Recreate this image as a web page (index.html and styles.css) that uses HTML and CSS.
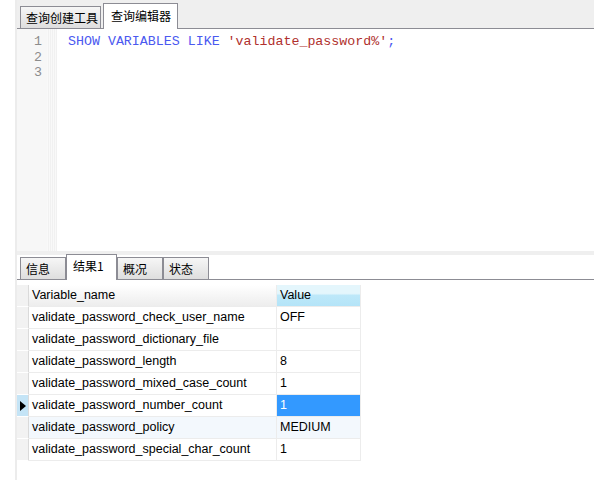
FILE: index.html
```html
<!DOCTYPE html>
<html>
<head>
<meta charset="utf-8">
<link rel="stylesheet" href="styles.css">
</head>
<body>
<div class="app">
  <div class="tabbar top">
    <div class="tab">查询创建工具</div>
    <div class="tab active">查询编辑器</div>
  </div>
  <div class="editor">
    <div class="gutter">
      <div class="nums"><div>1</div><div>2</div><div>3</div></div>
      <div class="stripe"></div>
    </div>
    <div class="code">
      <div><span class="kw">SHOW VARIABLES LIKE</span> <span class="str">'validate_password%'</span><span class="kw">;</span></div>
      <div>&nbsp;</div>
      <div>&nbsp;</div>
    </div>
  </div>
  <div class="sep"></div>
  <div class="tabbar bottom">
    <div class="tab">信息</div>
    <div class="tab active">结果1</div>
    <div class="tab">概况</div>
    <div class="tab">状态</div>
  </div>
  <div class="results">
    <div class="grid">
      <div class="row head">
        <div class="ind"></div>
        <div class="c1">Variable_name</div>
        <div class="c2 sel">Value</div>
      </div>
      <div class="row">
        <div class="ind"></div>
        <div class="c1">validate_password_check_user_name</div>
        <div class="c2">OFF</div>
      </div>
      <div class="row">
        <div class="ind"></div>
        <div class="c1">validate_password_dictionary_file</div>
        <div class="c2"></div>
      </div>
      <div class="row">
        <div class="ind"></div>
        <div class="c1">validate_password_length</div>
        <div class="c2">8</div>
      </div>
      <div class="row">
        <div class="ind"></div>
        <div class="c1">validate_password_mixed_case_count</div>
        <div class="c2">1</div>
      </div>
      <div class="row current">
        <div class="ind"><span class="arrow"></span></div>
        <div class="c1">validate_password_number_count</div>
        <div class="c2 cellsel">1</div>
      </div>
      <div class="row alt">
        <div class="ind"></div>
        <div class="c1">validate_password_policy</div>
        <div class="c2">MEDIUM</div>
      </div>
      <div class="row">
        <div class="ind"></div>
        <div class="c1">validate_password_special_char_count</div>
        <div class="c2">1</div>
      </div>
    </div>
  </div>
</div>
</body>
</html>
```
FILE: styles.css
```css
html, body {
  margin: 0;
  padding: 0;
  background: #ffffff;
  width: 594px;
  height: 480px;
  overflow: hidden;
}
.app {
  margin-left: 15px;
  width: 579px;
  height: 480px;
  border-left: 2px solid #ececec;
  display: flex;
  flex-direction: column;
  font-family: "Noto Sans CJK SC", sans-serif;
}
.tabbar {
  display: flex;
  align-items: flex-end;
  background: #efefef;
  border-bottom: 1px solid #8c8c94;
  padding-left: 3px;
  box-sizing: border-box;
}
.tabbar.top {
  height: 29px;
}
.tabbar.bottom {
  height: 25px;
  background: #ffffff;
}
.tab {
  font-size: 12px;
  line-height: 14px;
  color: #000;
  border: 1px solid #8c8c94;
  border-bottom: none;
  background: linear-gradient(#f6f6f6, #dedede);
  margin-right: 2px;
  box-sizing: border-box;
}
.tabbar.top .tab {
  padding: 4px 2px 3px 5px;
  height: 22px;
}
.tabbar.top .tab.active {
  background: #ffffff;
  padding: 5px 6px 0 7px;
  height: 26px;
  margin-bottom: -1px;
}
.tabbar.bottom .tab {
  width: 46px;
  height: 22px;
  padding: 4px 0 0 5px;
  margin-right: 0;
  margin-left: 0;
}
.tabbar.bottom .tab.active {
  width: 51px;
  height: 26px;
  padding: 4px 0 0 6px;
  background: #ffffff;
  margin-bottom: -1px;
}
.editor {
  height: 222px;
  display: flex;
  background: #fff;
  font-family: "Liberation Mono", monospace;
  font-size: 13.3px;
  line-height: 15.5px;
}
.gutter {
  display: flex;
  width: 40px;
}
.nums {
  width: 30px;
  background: #f7f7f7;
  color: #8c8c8c;
  text-align: right;
  padding-top: 5px;
  box-sizing: border-box;
  padding-right: 5px;
}
.stripe {
  width: 10px;
  background: repeating-linear-gradient(90deg, #f9f9f9 0 1px, #f1f1f1 1px 2px);
}
.code {
  padding-left: 11px;
  padding-top: 5px;
}
.kw { color: #4b59f0; }
.str { color: #b0302d; }
.sep {
  height: 4px;
  background: #efefef;
}
.results {
  flex: 1;
  padding-top: 5px;
}
.grid {
  display: flex;
  flex-direction: column;
  width: 344px;
  font-family: "Liberation Sans", sans-serif;
  font-size: 12.5px;
}
.row {
  display: flex;
  height: 22px;
}
.ind {
  width: 12px;
  background: #f2f2f2;
  border-right: 1px solid #dadada;
  border-bottom: 1px solid #ffffff;
  box-sizing: border-box;
  display: flex;
  align-items: center;
  justify-content: center;
}
.c1, .c2 {
  box-sizing: border-box;
  border-right: 1px solid #ececec;
  border-bottom: 1px solid #ececec;
  padding-left: 3px;
  line-height: 21px;
  white-space: nowrap;
}
.c1 { width: 248px; }
.c2 { width: 84px; }
.row.head .c1 {
  background: linear-gradient(#ffffff, #ededed);
}
.row.head .c2.sel {
  background: linear-gradient(#e4f6fc 0, #e4f6fc 40%, #bde8f9 50%, #b4e4f8 100%);
}
.row.alt .c1, .row.alt .c2 {
  background: #f3f8fd;
}
.row.current .ind {
  background: #c4e4f6;
}
.c2.cellsel {
  background: #3399ff;
  color: #ffffff;
}
.arrow {
  width: 0;
  height: 0;
  border-top: 5px solid transparent;
  border-bottom: 5px solid transparent;
  border-left: 6px solid #000;
  margin-left: 1px;
}
```
